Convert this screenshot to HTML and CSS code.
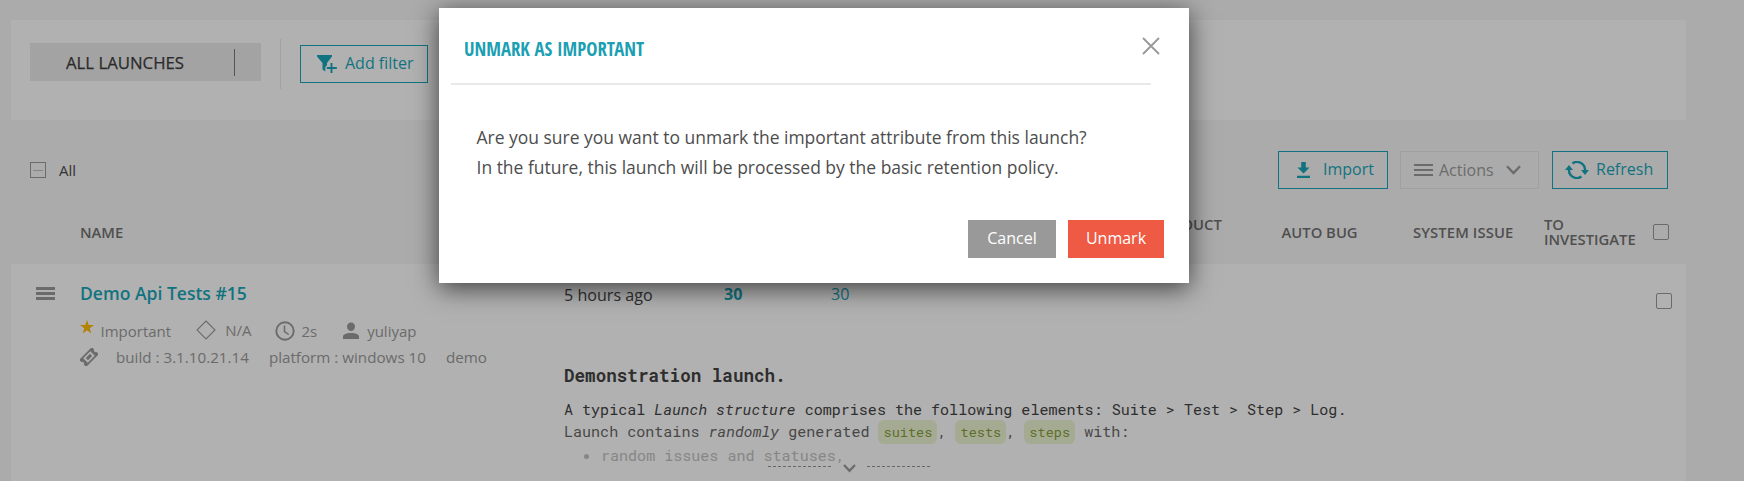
FILE: index.html
```
<!DOCTYPE html>
<html lang="en">
<head>
<meta charset="utf-8">
<title>All launches</title>
<link rel="stylesheet" href="styles.css">
</head>
<body>
<main class="page">
  <section class="filters">
    <div class="tab"><span class="tab-name">ALL LAUNCHES</span><i class="tab-line"></i></div>
    <i class="divider"></i>
    <button class="btn add"><svg width="20" height="18" viewBox="0 0 20 18"><path fill="#127380" d="M0 0h15v1.500L10 8v2.500L8.300 12v4.500L5.500 14.500V8L0 1.500z"/><path d="M14.500 7.500v10M9.500 12.500h10" stroke="#b1b1b1" stroke-width="4"/><path d="M14.500 8v10M9.800 13h10" stroke="#127380" stroke-width="1.900"/></svg><span>Add filter</span></button>
  </section>
  <section class="toolbar">
    <span class="check minus"></span><span class="all">All</span>
    <button class="btn import"><svg width="13" height="16" viewBox="0 0 13 16"><path fill="#127380" d="M4.200 0h4.600v5.500h3.700L6.500 11.500.500 5.500h3.700zM0 13.800h13V16H0z"/></svg><span>Import</span></button>
    <button class="btn actions"><svg width="19" height="12" viewBox="0 0 19 12"><path d="M0 1h19M0 6h19M0 11h19" stroke="#6b6b6b" stroke-width="1.900"/></svg><span>Actions</span><svg width="15" height="10" viewBox="0 0 15 10"><path d="M1 1.200l6.500 6.800L14 1.200" fill="none" stroke="#6b6b6b" stroke-width="2.300"/></svg></button>
    <button class="btn refresh"><svg width="24" height="18" viewBox="0 0 24 18"><g fill="none" stroke="#127380" stroke-width="2.400"><path d="M7.500 2.400A8 8 0 0 1 20 9.500M16.500 15.600A8 8 0 0 1 4 8.500"/></g><path fill="#127380" d="M0 9l4-5 4 5zM16 9h8l-4 5z"/></svg><span>Refresh</span></button>
  </section>
  <section class="columns">
    <span>NAME</span><span class="product">PRODUCT<br>BUG</span><span>AUTO BUG</span><span class="system">SYSTEM ISSUE</span><span>TO<br>INVESTIGATE</span><i class="check"></i>
  </section>
  <section class="row">
    <svg class="burger" width="19" height="13" viewBox="0 0 19 13"><path d="M0 1.500h19M0 6.500h19M0 11.500h19" stroke="#6b6b6b" stroke-width="3"/></svg>
    <div class="name">
      <a class="title">Demo Api Tests #15</a>
      <div class="meta">
        <svg class="star" width="14" height="14" viewBox="0 0 14 14"><path fill="#b28300" d="M7 0l1.700 5H14L9.700 8.200l1.600 5.300L7 10.300l-4.300 3.200 1.600-5.300L0 5h5.300z"/></svg><span class="m1">Important</span>
        <svg class="diamond" width="20" height="20" viewBox="0 0 20 20"><path d="M10 1l9 9-9 9-9-9z" fill="none" stroke="#6b6b6b" stroke-width="1.100"/></svg><span class="m2">N/A</span>
        <svg width="20" height="20" viewBox="0 0 20 20"><circle cx="10" cy="10" r="8.700" fill="none" stroke="#6b6b6b" stroke-width="1.900"/><path d="M9.500 4.500v6l4.200 3" fill="none" stroke="#6b6b6b" stroke-width="1.500"/></svg><span class="m3">2s</span>
        <svg width="16" height="18" viewBox="0 0 16 18"><path fill="#6b6b6b" d="M8 .500c2.400 0 4 1.800 4 4.300C12 7.300 10 9 8 9S4 7.300 4 4.800C4 2.300 5.600.500 8 .500zM0 17v-2.500C0 12.500 3.500 11 8 11s8 1.500 8 3.500V17z"/></svg><span class="m4">yuliyap</span>
      </div>
      <div class="tags">
        <svg width="18" height="18" viewBox="0 0 18 18"><g transform="rotate(-45 9 9)"><path fill="#6b6b6b" fill-rule="evenodd" d="M0 4h18v3.200a1.900 1.900 0 0 0 0 3.600V14H0v-3.200a1.900 1.900 0 0 0 0-3.600zM4 5.800v6.400h10V5.800z"/><path fill="#6b6b6b" d="M6 7.500h6v3H6z"/></g></svg><span>build : 3.1.10.21.14</span><span>platform : windows 10</span><span>demo</span>
      </div>
    </div>
    <div class="info">
      <div class="stats"><span>5 hours ago</span><b>30</b><em>30</em></div>
      <div class="desc">
        <h3>Demonstration launch.</h3>
        <p>A typical <i>Launch structure</i> comprises the following elements: Suite &gt; Test &gt; Step &gt; Log.</p>
        <p class="fade">Launch contains <i>randomly</i> generated <code>suites</code>, <code>tests</code>, <code>steps</code> with:</p>
        <ul><li>random issues and statuses,</li></ul>
        <div class="more"><i></i><svg width="13" height="9" viewBox="0 0 13 9"><path d="M1 1l5.500 5.800L12 1" fill="none" stroke="#6b6b6b" stroke-width="2.200"/></svg><i></i></div>
      </div>
    </div>
    <i class="check"></i>
  </section>
</main>
<div class="modal">
  <header><h2>UNMARK AS IMPORTANT</h2><svg width="18" height="18" viewBox="0 0 18 18"><path d="M1 1l16 16M17 1L1 17" stroke="#999" stroke-width="1.900"/></svg></header>
  <p>Are you sure you want to unmark the important attribute from this launch?<br>In the future, this launch will be processed by the basic retention policy.</p>
  <footer><button class="cancel">Cancel</button><button class="unmark">Unmark</button></footer>
</div>
</body>
</html>
```
FILE: styles.css
```
* { box-sizing: border-box; }
body { margin: 0; height: 481px; overflow: hidden; background: #ababab; font-family: "Open Sans", sans-serif; position: relative; }
button { font: 16px/20px "Open Sans", sans-serif; border: 0; padding: 0; background: none; }
svg { display: block; flex: none; }
h2, h3, p, ul { margin: 0; }
.page { width: 1675px; margin-left: 11px; padding-top: 20px; }
.filters { height: 100px; background: #b1b1b1; display: flex; align-items: flex-start; padding-left: 19px; }
.tab { margin-top: 23px; width: 231px; height: 38px; background: #a3a3a3; display: flex; align-items: center; padding: 0 26px 0 36px; justify-content: space-between; }
.tab-name { font-size: 16.75px; line-height: 20px; color: #2b2b2b; padding-top: 1px; -webkit-text-stroke: .25px #2b2b2b; }
.tab-line { width: 1px; height: 27px; background: #555; }
.divider { margin: 19px 19px 0 19px; width: 1px; height: 50px; background: #a2a2a2; }
.btn { height: 38px; border: 1px solid #127380; color: #127380; display: flex; align-items: center; white-space: nowrap; }
.btn span { margin-top: -3px; }
.add { margin-top: 25px; width: 128px; padding-left: 16px; gap: 8px; }
.toolbar { height: 80px; padding: 20px 18px 0 19px; display: flex; align-items: center; }
.check { display: block; width: 16px; height: 16px; border: 1px solid #6b6b6b; border-radius: 2px; flex: none; }
.minus { border-radius: 0; padding: 7px 2px; }
.minus::before { content: ""; display: block; height: 1px; background: #858585; }
.all { margin-left: 13px; font-size: 15px; line-height: 20px; color: #333; flex: 1; }
.import { width: 110px; margin-right: 12px; padding-left: 18px; gap: 13px; }
.actions { width: 139px; margin-right: 13px; padding-left: 13px; border-color: #a0a0a0; color: #6b6b6b; }
.actions span { margin: 0 12px 0 6px; }
.refresh { width: 116px; padding-left: 12px; gap: 7px; }
.columns { height: 64px; display: grid; grid-template-columns: 1072px 129.5px 130.5px 132px 109px 16px; padding-left: 69px; align-items: center; justify-items: start; font-size: 14.8px; line-height: 15px; font-weight: 600; color: #4f4f4f; }
.system { letter-spacing: .1px; padding-left: 1px; }
.row { height: 217px; background: #b1b1b1; display: flex; padding-right: 14px; }
.burger { margin: 23px 25px 0 25px; }
.name { width: 484px; padding-top: 16px; }
.title { display: block; font-size: 17.55px; line-height: 26px; font-weight: 600; color: #127380; }
.meta { display: flex; align-items: center; height: 22px; margin-top: 14px; font-size: 15px; line-height: 20px; color: #6b6b6b; }
.star { margin-top: -8px; }
.m1 { margin: 0 25px 0 6.5px; }
.diamond { margin-top: -3px; }
.m2 { margin: -2px 24px 0 9px; }
.m3 { margin: 0 26px 0 6px; }
.m4 { margin-left: 8px; }
.tags { display: flex; align-items: center; height: 22px; margin-top: 4px; font-size: 15.2px; line-height: 20px; color: #6b6b6b; }
.tags svg { margin-right: -2px; }
.tags span { margin-left: 20px; }
.info { flex: 1; color: #2e2e2e; }
.stats { display: flex; height: 60px; padding-top: 20px; font-size: 16.1px; line-height: 22px; }
.stats span { width: 160px; }
.stats b, .stats em { width: 107px; margin-top: -1px; color: #127380; font-style: normal; }
.desc { font: 15.06px/22px "Roboto Mono", "Liberation Mono", monospace; white-space: nowrap; padding-top: 35px; }
.desc h3 { font-size: 17.6px; line-height: 24px; padding-top: 5px; margin-bottom: 10px; }
.fade { color: #474747; }
code { font: 13.6px/22px "Roboto Mono", "Liberation Mono", monospace; background: #a5ab93; color: #5d6e2b; padding: 3px 5px; border-radius: 6px; }
ul { list-style: disc; padding-left: 37px; margin-top: 1px; color: #868686; }
.more { display: flex; width: 162px; justify-content: space-between; margin: -2px 0 0 204px; height: 9px; }
.more i { width: 63px; margin-top: 2px; border-top: 1px dashed #666; }
.row > .check { margin-top: 29px; }
.modal { position: absolute; left: 439px; top: 8px; width: 750px; height: 275px; background: #fff; box-shadow: 0 5px 24px rgba(0,0,0,.65); }
.modal header { margin: 0 38px 0 12px; height: 77px; border-bottom: 2px solid #e9e9e9; display: flex; justify-content: space-between; padding: 29px 0 0 13px; }
.modal h2 { font: 700 18.75px/24px "Open Sans Condensed", "Open Sans", sans-serif; color: #1b9fb3; }
.modal header svg { margin-right: -9px; }
.modal p { margin: 37px 0 0 37.5px; font-size: 17.48px; line-height: 30px; color: #4d4d4d; }
footer { display: flex; justify-content: flex-end; gap: 12px; padding: 38px 25px 0 0; }
footer button { height: 38px; color: #fff; padding-bottom: 2px; }
.cancel { width: 88px; background: #999; }
.unmark { width: 96px; background: #ee5a44; }
```
